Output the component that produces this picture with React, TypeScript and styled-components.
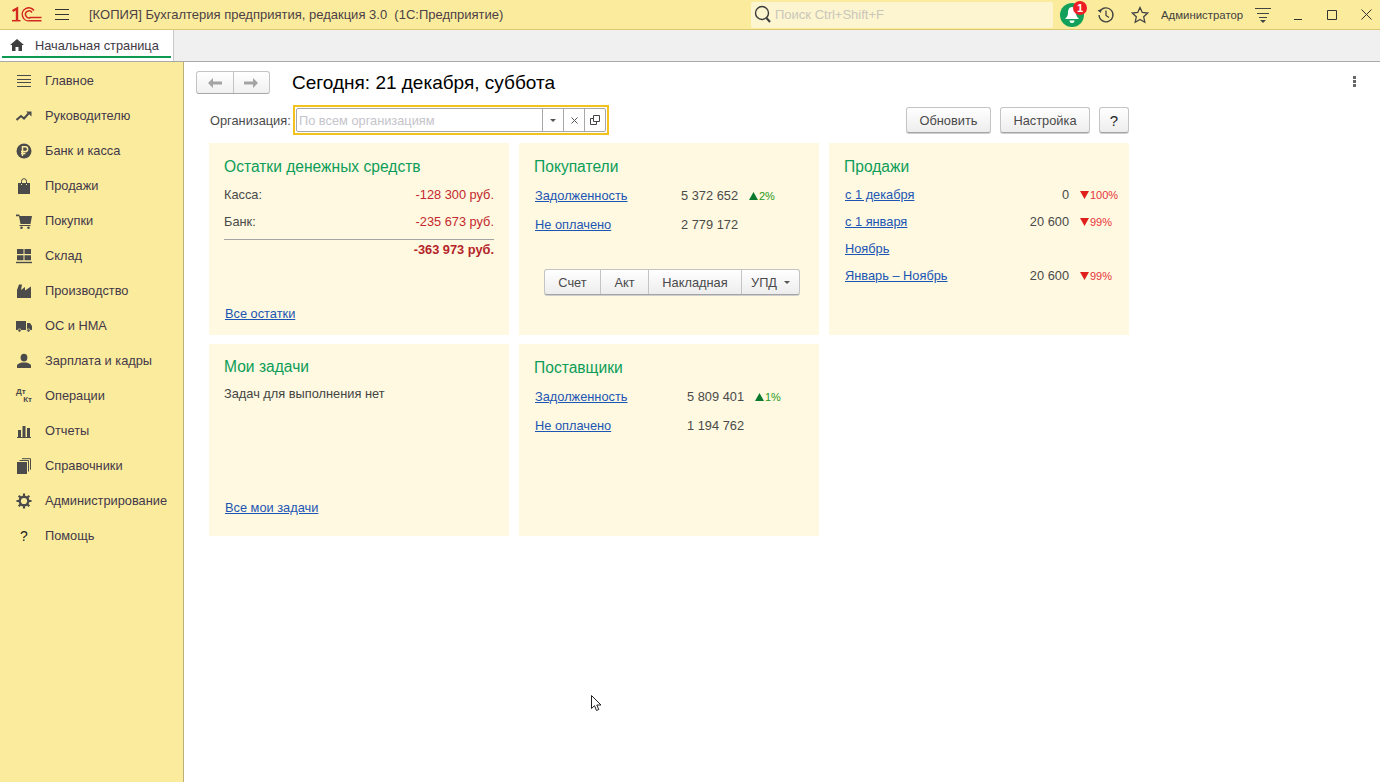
import React from 'react';
import styled, { createGlobalStyle } from 'styled-components';

const GlobalStyle = createGlobalStyle`
  html, body {
    margin: 0;
    padding: 0;
    height: 100%;
    background: #fff;
    overflow: hidden;
  }
  body {
    font-family: 'Liberation Sans', Arial, sans-serif;
    font-size: 12.8px;
    color: #4a4a4a;
  }
  #root {
    height: 100%;
  }
`;

const Glyph = ({ children, w = 16, h = 16 }: { children: React.ReactNode; w?: number; h?: number }) => (
  <svg width={w} height={h} viewBox={`0 0 ${w} ${h}`} fill="none">
    {children}
  </svg>
);

const ICON = '#4b4b4b';

const Delta = ({ $dir, value }: { $dir: 'up' | 'down'; value: string }) => (
  <DeltaText $dir={$dir}>
    <svg width="9" height="8" viewBox="0 0 9 8" fill={$dir === 'up' ? '#0b7a2e' : '#e0201c'}>
      <path d={$dir === 'up' ? 'M4.5 0L9 8H0z' : 'M0 0h9L4.5 8z'} />
    </svg>
    {value}
  </DeltaText>
);

const App = () => (
  <Page>
    <GlobalStyle />
    <Header>
      <Logo>
        <svg width="30" height="17" viewBox="0 0 30 17" fill="none" stroke="#d3281f">
          <path d="M.5 5L5 2.500V15" strokeWidth="2.400" />
          <path d="M0 14.700h8.500" strokeWidth="1.500" />
          <path d="M22 4.500A6.500 6.500 0 1 0 18 14.700H29.500" strokeWidth="1.500" />
          <path d="M20 6.500A3.500 3.500 0 1 0 18.500 11.500H29.500" strokeWidth="1.500" />
        </svg>
      </Logo>
      <Burger>
        <svg width="14" height="12" viewBox="0 0 14 12" stroke="#333">
          <path d="M0 .5h14M0 5.500h14M0 10.500h14" />
        </svg>
      </Burger>
      <AppTitle>[КОПИЯ] Бухгалтерия предприятия, редакция 3.0&nbsp; (1С:Предприятие)</AppTitle>
      <SearchBox>
        <svg width="18" height="19" viewBox="0 0 18 19" fill="none" stroke="#3c3c3c">
          <circle cx="8" cy="8" r="6.5" strokeWidth="1.4" />
          <path d="M12.500 13l3.500 4" strokeWidth="2" />
        </svg>
        <SearchHint>Поиск Ctrl+Shift+F</SearchHint>
      </SearchBox>
      <Bell>
        <svg width="16" height="18" viewBox="0 0 16 18" fill="#fff">
          <path d="M8 1c3 0 4 3 4 6 0 3 1.500 4.500 3 6H1c1.500-1.500 3-3 3-6 0-3 1-6 4-6z" />
          <path d="M5.500 14.500h5a2.500 2.500 0 0 1-5 0z" />
        </svg>
        <BellBadge>1</BellBadge>
      </Bell>
      <HistoryIcon>
        <svg width="18" height="18" viewBox="0 0 18 18" fill="none" stroke="#444">
          <path d="M3 5.200A7 7 0 1 1 2 9" strokeWidth="1.3" />
          <path d="M.5 4.500L4 7l.5-4z" fill="#444" stroke="none" />
          <path d="M9 4.500V9.500l3 2" strokeWidth="1.3" />
        </svg>
      </HistoryIcon>
      <StarIcon>
        <svg width="18" height="18" viewBox="0 0 18 18" fill="none" stroke="#444" strokeWidth="1.3">
          <path d="M9 1.500l2.300 5 5.400.6-4 3.700 1.100 5.400L9 13.500l-4.800 2.700 1.100-5.400-4-3.700 5.400-.6z" />
        </svg>
      </StarIcon>
      <UserName>Администратор</UserName>
      <UserMenu>
        <svg width="16" height="16" viewBox="0 0 16 16" stroke="#444">
          <path d="M0 1.500h16M2 6.500h12M4 10.500h8" />
          <path d="M5 13h6l-3 3z" fill="#444" stroke="none" />
        </svg>
      </UserMenu>
      <WindowButton>
        <svg width="10" height="10" viewBox="0 0 10 10" stroke="#333" fill="none">
          <path d="M1 9.500h8" />
        </svg>
      </WindowButton>
      <WindowButton>
        <svg width="10" height="10" viewBox="0 0 10 10" stroke="#333" fill="none">
          <path d="M.5.500h9v9h-9z" />
        </svg>
      </WindowButton>
      <WindowButton>
        <svg width="11" height="11" viewBox="0 0 11 11" stroke="#333" fill="none">
          <path d="M.5.500l10 10M10.500.500l-10 10" />
        </svg>
      </WindowButton>
    </Header>

    <TabBar>
      <Tab>
        <svg width="14" height="12" viewBox="0 0 14 12" fill="#3f3f3f">
          <path d="M7 0l7 6h-2v6H8.500V8h-3v4H2V6H0z" />
        </svg>
        Начальная страница
      </Tab>
    </TabBar>

    <Body>
      <Sidebar>
        {NAV_ITEMS.map(({ id, title, icon }) => (
          <NavItem key={id}>
            <NavIcon>{icon}</NavIcon>
            {title}
          </NavItem>
        ))}
      </Sidebar>

      <Main>
        <TitleRow>
          <ArrowGroup>
            <ArrowButton>
              <svg width="14" height="10" viewBox="0 0 14 10" fill="#a4a4a4">
                <path d="M0 5l5-5v3.500h9v3H5V10z" />
              </svg>
            </ArrowButton>
            <ArrowButton>
              <svg width="14" height="10" viewBox="0 0 14 10" fill="#a4a4a4">
                <path d="M14 5L9 0v3.500H0v3h9V10z" />
              </svg>
            </ArrowButton>
          </ArrowGroup>
          <PageTitle>Сегодня: 21 декабря, суббота</PageTitle>
          <Kebab>
            <i />
            <i />
            <i />
          </Kebab>
        </TitleRow>

        <Content>
          <FilterRow>
            <FilterLabel>Организация:</FilterLabel>
            <FocusFrame>
              <OrgInput>
                <OrgHint>По всем организациям</OrgHint>
                <OrgAction>
                  <svg width="6" height="3" viewBox="0 0 6 3" fill="#555">
                    <path d="M0 0h6L3 3z" />
                  </svg>
                </OrgAction>
                <OrgAction>
                  <svg width="7" height="7" viewBox="0 0 7 7" stroke="#555" fill="none">
                    <path d="M.5.500l6 6M6.500.500l-6 6" />
                  </svg>
                </OrgAction>
                <OrgAction>
                  <svg width="10" height="10" viewBox="0 0 10 10" stroke="#444" fill="none">
                    <path d="M3.500.500h6v6h-6zM3.500 3.500h-3v6h6v-3" />
                  </svg>
                </OrgAction>
              </OrgInput>
            </FocusFrame>
            <FilterActions>
              <ToolButton $width={85}>Обновить</ToolButton>
              <ToolButton $width={90}>Настройка</ToolButton>
              <ToolButton $width={30} $strong>?</ToolButton>
            </FilterActions>
          </FilterRow>

          <Panels>
            <Panel>
              <PanelTitle>Остатки денежных средств</PanelTitle>
              <CashRow>
                Касса:
                <Negative>-128 300 руб.</Negative>
              </CashRow>
              <CashRow>
                Банк:
                <Negative>-235 673 руб.</Negative>
              </CashRow>
              <CashTotal>-363 973 руб.</CashTotal>
              <FooterLink>Все остатки</FooterLink>
            </Panel>

            <Panel>
              <PanelTitle>Покупатели</PanelTitle>
              <DataList $gap={29} $top={14}>
                <DataRow $valueEnd={203}>
                  <DataLink>Задолженность</DataLink>
                  <DataValue>5 372 652</DataValue>
                  <Delta $dir="up" value="2%" />
                </DataRow>
                <DataRow $valueEnd={203}>
                  <DataLink>Не оплачено</DataLink>
                  <DataValue>2 779 172</DataValue>
                </DataRow>
              </DataList>
              <DocGroup>
                <DocButton $width={55}>Счет</DocButton>
                <DocButton $width={48}>Акт</DocButton>
                <DocButton $width={93}>Накладная</DocButton>
                <DocButton $width={58}>
                  УПД
                  <DocCaret />
                </DocButton>
              </DocGroup>
            </Panel>

            <Panel>
              <PanelTitle>Продажи</PanelTitle>
              <DataList $gap={27} $top={13}>
                <DataRow $valueEnd={224}>
                  <DataLink>с 1 декабря</DataLink>
                  <DataValue>0</DataValue>
                  <Delta $dir="down" value="100%" />
                </DataRow>
                <DataRow $valueEnd={224}>
                  <DataLink>с 1 января</DataLink>
                  <DataValue>20 600</DataValue>
                  <Delta $dir="down" value="99%" />
                </DataRow>
                <DataRow $valueEnd={224}>
                  <DataLink>Ноябрь</DataLink>
                </DataRow>
                <DataRow $valueEnd={224}>
                  <DataLink>Январь – Ноябрь</DataLink>
                  <DataValue>20 600</DataValue>
                  <Delta $dir="down" value="99%" />
                </DataRow>
              </DataList>
            </Panel>

            <Panel>
              <PanelTitle $shift={-1}>Мои задачи</PanelTitle>
              <PlainText>Задач для выполнения нет</PlainText>
              <FooterLink $lift={7}>Все мои задачи</FooterLink>
            </Panel>

            <Panel>
              <PanelTitle>Поставщики</PanelTitle>
              <DataList $gap={29} $top={14}>
                <DataRow $valueEnd={209}>
                  <DataLink>Задолженность</DataLink>
                  <DataValue>5 809 401</DataValue>
                  <Delta $dir="up" value="1%" />
                </DataRow>
                <DataRow $valueEnd={209}>
                  <DataLink>Не оплачено</DataLink>
                  <DataValue>1 194 762</DataValue>
                </DataRow>
              </DataList>
            </Panel>
          </Panels>
        </Content>
      </Main>
    </Body>

    <Pointer>
      <svg width="12" height="18" viewBox="0 0 12 18">
        <path d="M.5.500v13l3-2.800 2 4.800 2.300-1-2-4.500h4.200z" fill="#fff" stroke="#222" />
      </svg>
    </Pointer>
  </Page>
);

export default App;

const Page = styled.div`
  position: relative;
  display: flex;
  flex-direction: column;
  height: 100%;
`;

const Header = styled.header`
  display: flex;
  align-items: center;
  height: 29px;
  flex: none;
  overflow: hidden;
  background: #fbec9d;
  border-bottom: 1px solid #dcc96f;

  & > * {
    flex: none;
  }
`;

const Logo = styled.div`
  display: flex;
  width: 30px;
  margin-left: 12px;
`;

const Burger = styled.div`
  display: flex;
  margin-left: 13px;
`;

const AppTitle = styled.div`
  width: 662px;
  margin-left: 20px;
  color: #4c3f46;
  font-size: 13px;
  white-space: nowrap;
`;

const SearchBox = styled.div`
  display: flex;
  align-items: center;
  gap: 3px;
  box-sizing: border-box;
  width: 302px;
  height: 26px;
  padding-left: 3px;
  background: #fdf5cf;
  border-radius: 2px;
`;

const SearchHint = styled.span`
  color: #c9c7bb;
  font-size: 13px;
`;

const Bell = styled.div`
  position: relative;
  display: flex;
  align-items: center;
  justify-content: center;
  width: 24px;
  height: 24px;
  margin-left: 7px;
  border-radius: 50%;
  background: #12a05a;
`;

const BellBadge = styled.span`
  position: absolute;
  top: -2px;
  right: -3px;
  width: 14px;
  height: 14px;
  border-radius: 50%;
  background: #ee1c25;
  color: #fff;
  font-size: 11px;
  font-weight: 700;
  line-height: 14px;
  text-align: center;
`;

const HistoryIcon = styled.div`
  display: flex;
  margin-left: 13px;
`;

const StarIcon = styled.div`
  display: flex;
  margin-left: 16px;
`;

const UserName = styled.div`
  margin-left: 12px;
  color: #3f3f3f;
  font-size: 11.4px;
`;

const UserMenu = styled.div`
  display: flex;
  margin-left: 12px;
`;

const WindowButton = styled.div`
  display: flex;
  align-items: center;
  justify-content: center;
  width: 34px;
  &:nth-last-child(3) {
    margin-left: 10px;
  }
`;

const TabBar = styled.div`
  display: flex;
  flex: none;
  height: 31px;
  background: #f0f0f0;
  border-bottom: 1px solid #a9a9a9;
`;

const Tab = styled.div`
  position: relative;
  display: flex;
  align-items: center;
  gap: 11px;
  box-sizing: border-box;
  width: 174px;
  height: 31px;
  padding: 0 0 1px 10px;
  background: #fff;
  border-right: 1px solid #c9c9c9;
  color: #3f3a45;

  &::after {
    content: '';
    position: absolute;
    left: 2px;
    right: 2px;
    bottom: 3px;
    height: 2px;
    background: #0b9a50;
  }
`;

const Body = styled.div`
  display: flex;
  flex: 1;
  min-height: 0;
`;

const Sidebar = styled.nav`
  box-sizing: border-box;
  flex: none;
  width: 184px;
  padding-top: 1px;
  background: #fbec9d;
  border-right: 1px solid #bcb074;
`;

const NavItem = styled.div`
  display: flex;
  align-items: center;
  height: 35px;
  color: #43384a;
`;

const NavIcon = styled.span`
  display: flex;
  align-items: center;
  justify-content: center;
  width: 16px;
  height: 16px;
  margin: 0 13px 0 16px;
`;

const DebitCredit = styled.span`
  display: flex;
  flex-direction: column;
  width: 16px;
  color: ${ICON};
  font-size: 8px;
  font-weight: 700;
  line-height: 8px;

  & > span + span {
    align-self: flex-end;
  }
`;

const HelpMark = styled.span`
  color: #222;
  font-size: 14px;
`;

const Main = styled.main`
  flex: 1;
  min-width: 0;
  padding: 9px 0 0 12px;
`;

const TitleRow = styled.div`
  display: flex;
  align-items: center;
  height: 23px;
`;

const ArrowGroup = styled.div`
  display: flex;
  box-sizing: border-box;
  width: 74px;
  height: 23px;
  background: linear-gradient(#fff, #f0f0f0);
  border: 1px solid #c4c4c4;
  border-bottom-color: #a8a8a8;
  border-radius: 3px;
`;

const ArrowButton = styled.div`
  display: flex;
  flex: 1;
  align-items: center;
  justify-content: center;
  & + & {
    border-left: 1px solid #c4c4c4;
  }
`;

const PageTitle = styled.h1`
  margin: 0 0 0 22px;
  color: #000;
  font-size: 19px;
  font-weight: 400;
`;

const Kebab = styled.div`
  display: flex;
  flex-direction: column;
  gap: 1px;
  margin: 0 24px 2px auto;

  & > i {
    width: 3px;
    height: 3px;
    background: #666;
  }
`;

const Content = styled.div`
  width: 920px;
  margin: 11px 0 0 13px;
`;

const FilterRow = styled.div`
  display: flex;
  align-items: center;
  height: 30px;
`;

const FilterLabel = styled.label`
  width: 81px;
  margin-left: 1px;
  color: #4a4a4a;
`;

const FocusFrame = styled.div`
  box-sizing: border-box;
  width: 316px;
  height: 30px;
  margin-left: 2px;
  padding: 1px;
  border: 2px solid #f3c21b;
`;

const OrgInput = styled.div`
  display: flex;
  box-sizing: border-box;
  height: 24px;
  border: 1px solid #a8a8a8;
  border-radius: 2px;
  background: #fff;
`;

const OrgHint = styled.span`
  flex: 1;
  padding-left: 2px;
  color: #c4c4ca;
  line-height: 23px;
`;

const OrgAction = styled.span`
  display: flex;
  align-items: center;
  justify-content: center;
  width: 20px;
  border-left: 1px solid #a8a8a8;
`;

const FilterActions = styled.div`
  display: flex;
  gap: 9px;
  margin-left: auto;
`;

const ToolButton = styled.button<{ $width: number; $strong?: boolean }>`
  box-sizing: border-box;
  width: ${(p) => p.$width}px;
  height: 26px;
  padding: 0;
  background: linear-gradient(#fff, #ededed);
  border: 1px solid #c4c4c4;
  border-bottom-color: #a4a4a4;
  border-radius: 3px;
  box-shadow: 0 1px 0 #cfcfcf;
  color: ${(p) => (p.$strong ? '#222' : '#4a4a4a')};
  font-family: inherit;
  font-size: ${(p) => (p.$strong ? '15px' : '12.8px')};
`;

const Panels = styled.div`
  display: grid;
  grid-template-columns: repeat(3, 300px);
  grid-auto-rows: 192px;
  gap: 9px 10px;
  margin-top: 8px;
`;

const Panel = styled.section`
  display: flex;
  flex-direction: column;
  box-sizing: border-box;
  padding: 15px 15px 14px;
  background: #fef9e0;
`;

const PanelTitle = styled.h2<{ $shift?: number }>`
  margin: ${(p) => p.$shift ?? 0}px 0 0;
  color: #0c9d5a;
  font-size: 15.6px;
  font-weight: 400;
  line-height: 17px;
`;

const CashRow = styled.div`
  display: flex;
  justify-content: space-between;
  height: 27px;
  line-height: 14px;
  h2 + & {
    margin-top: 13px;
  }
`;

const Negative = styled.span`
  color: #c4282e;
`;

const CashTotal = styled.div`
  margin-top: -3px;
  padding-top: 3px;
  border-top: 1px solid #a3a3a3;
  color: #b5242a;
  font-weight: 700;
  text-align: right;
  line-height: 14px;
`;

const FooterLink = styled.a<{ $lift?: number }>`
  align-self: flex-start;
  margin: auto 0 ${(p) => p.$lift ?? 0}px 1px;
  color: #1c55b4;
  line-height: 14px;
  text-decoration: underline;
`;

const PlainText = styled.div`
  margin-top: 12px;
  color: #444;
  line-height: 14px;
`;

const DataList = styled.div<{ $gap: number; $top: number }>`
  display: flex;
  flex-direction: column;
  gap: ${(p) => p.$gap - 14}px;
  margin-top: ${(p) => p.$top}px;
  padding-left: 1px;
`;

const DataRow = styled.div<{ $valueEnd: number }>`
  display: grid;
  grid-template-columns: ${(p) => p.$valueEnd - 110}px 110px auto;
  align-items: center;
  line-height: 14px;
`;

const DataLink = styled.a`
  justify-self: start;
  color: #1c55b4;
  text-decoration: underline;
  white-space: nowrap;
`;

const DataValue = styled.span`
  color: #4a4a4a;
  text-align: right;
  grid-column: 2;
`;

const DeltaText = styled.span<{ $dir: 'up' | 'down' }>`
  display: flex;
  align-items: center;
  gap: 1px;
  margin-left: 11px;
  color: ${(p) => (p.$dir === 'up' ? '#2a9a20' : '#e8333c')};
  font-size: 11px;
`;

const DocGroup = styled.div`
  display: flex;
  align-self: flex-start;
  margin: 37px 0 0 10px;
  background: linear-gradient(#fff, #ededed);
  border: 1px solid #c4c4c4;
  border-bottom-color: #a4a4a4;
  border-radius: 3px;
  box-shadow: 0 1px 0 #cfcfcf;
`;

const DocButton = styled.div<{ $width: number }>`
  display: flex;
  align-items: center;
  justify-content: center;
  gap: 7px;
  box-sizing: border-box;
  width: ${(p) => p.$width}px;
  height: 24px;
  color: #4a4a4a;
  & + & {
    border-left: 1px solid #c4c4c4;
  }
`;

const DocCaret = styled.i`
  width: 0;
  height: 0;
  border: 3px solid transparent;
  border-top: 3px solid #555;
  border-bottom: 0;
`;

const Pointer = styled.div`
  position: absolute;
  left: 591px;
  top: 695px;
  display: flex;
`;

const NAV_ITEMS: { id: number; title: string; icon: React.ReactNode }[] = [
  {
    id: 1,
    title: 'Главное',
    icon: (
      <Glyph>
        <path d="M1 2.500h14M1 6.500h14M1 9.500h14M1 13.500h14" stroke={ICON} />
      </Glyph>
    ),
  },
  {
    id: 2,
    title: 'Руководителю',
    icon: (
      <Glyph>
        <path d="M.5 12l4.500-4 3 2.500 4.500-5" stroke={ICON} strokeWidth="2" />
        <path d="M10 3.500h5.500v5z" fill={ICON} />
      </Glyph>
    ),
  },
  {
    id: 3,
    title: 'Банк и касса',
    icon: (
      <Glyph>
        <circle cx="8" cy="8" r="7.5" fill={ICON} />
        <path d="M6.500 13V3.800h2.800a2.300 2.300 0 0 1 0 4.700H5M5 10.500h4.500" stroke="#FBEC9D" strokeWidth="1.5" />
      </Glyph>
    ),
  },
  {
    id: 4,
    title: 'Продажи',
    icon: (
      <Glyph>
        <path d="M2 5h3v2h1V5h4v2h1V5h3v11H2z" fill={ICON} />
        <path d="M5.500 6V3.200a2.500 2.500 0 0 1 5 0V6" stroke={ICON} />
      </Glyph>
    ),
  },
  {
    id: 5,
    title: 'Покупки',
    icon: (
      <Glyph>
        <path d="M0 1.500h3l1 1.500h12l-1.500 8H4.500L3 3.200H0z" fill={ICON} />
        <path d="M3.500 12.500h11" stroke={ICON} />
        <circle cx="5.5" cy="14.7" r="1.3" fill={ICON} />
        <circle cx="12.5" cy="14.7" r="1.3" fill={ICON} />
      </Glyph>
    ),
  },
  {
    id: 6,
    title: 'Склад',
    icon: (
      <Glyph>
        <path d="M1 1h6.500v5H1zM8.500 1H15v5H8.500zM1 7.200h6.500v5H1zM8.500 7.200H15v5H8.500z" fill={ICON} />
        <path d="M0 14.500h16" stroke={ICON} strokeWidth="1.4" />
      </Glyph>
    ),
  },
  {
    id: 7,
    title: 'Производство',
    icon: (
      <Glyph>
        <path d="M1 15V7L3 1.500h3L5 7l4-3v3.500L15 3.500V15z" fill={ICON} />
      </Glyph>
    ),
  },
  {
    id: 8,
    title: 'ОС и НМА',
    icon: (
      <Glyph>
        <path d="M0 3h10v9H0zM11 5h3l2 3v4h-5z" fill={ICON} />
        <circle cx="3.5" cy="12.5" r="1.6" fill={ICON} stroke="#FBEC9D" strokeWidth=".7" />
        <circle cx="12.5" cy="12.5" r="1.6" fill={ICON} stroke="#FBEC9D" strokeWidth=".7" />
      </Glyph>
    ),
  },
  {
    id: 9,
    title: 'Зарплата и кадры',
    icon: (
      <Glyph>
        <ellipse cx="8" cy="4.6" rx="3.4" ry="3.9" fill={ICON} />
        <path d="M1 15v-2.200c0-1.600 3-2.800 4.600-3.200h4.800c1.600.4 4.600 1.600 4.600 3.200V15z" fill={ICON} />
      </Glyph>
    ),
  },
  {
    id: 10,
    title: 'Операции',
    icon: (
      <DebitCredit>
        <span>Дт</span>
        <span>Кт</span>
      </DebitCredit>
    ),
  },
  {
    id: 11,
    title: 'Отчеты',
    icon: (
      <Glyph>
        <path d="M2 7h3v7H2zM6.500 3h3v11h-3zM11 5h3v9h-3z" fill={ICON} />
        <path d="M1 14.500h14" stroke={ICON} />
      </Glyph>
    ),
  },
  {
    id: 12,
    title: 'Справочники',
    icon: (
      <Glyph>
        <path d="M1 4h10v12H1z" fill={ICON} />
        <path d="M3.500 2.500h9v11M6 .7h8.500v11" stroke={ICON} />
      </Glyph>
    ),
  },
  {
    id: 13,
    title: 'Администрирование',
    icon: (
      <Glyph>
        <circle cx="8" cy="8" r="4.3" stroke={ICON} strokeWidth="2.4" />
        <path
          d="M8 .5v3M8 12.500v3M.5 8h3M12.500 8h3M2.700 2.700l2.100 2.100M11.200 11.200l2.100 2.100M13.300 2.700l-2.100 2.100M4.800 11.200l-2.100 2.100"
          stroke={ICON}
          strokeWidth="2.2"
        />
      </Glyph>
    ),
  },
  { id: 14, title: 'Помощь', icon: <HelpMark>?</HelpMark> },
];
